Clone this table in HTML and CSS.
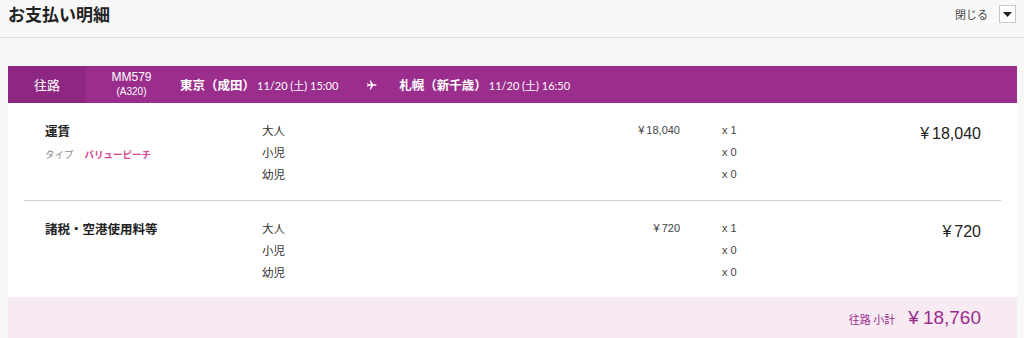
FILE: index.html
```html
<!DOCTYPE html>
<html lang="ja">
<head>
<meta charset="utf-8">
<title>お支払い明細</title>
<link rel="stylesheet" href="styles.css">
</head>
<body>
<header class="top">
  <h1 class="title">お支払い明細</h1>
  <div class="close">
    <span class="close-label">閉じる</span>
    <span class="close-btn"><svg width="9" height="5" viewBox="0 0 9 5"><path d="M0 0h9L4.5 5z" fill="#222"/></svg></span>
  </div>
</header>
<main class="card">
  <div class="flight">
    <div class="dir">往路</div>
    <div class="fno"><span class="num">MM579</span><span class="eq">(A320)</span></div>
    <div class="leg">
      <span class="city">東京（成田）</span><span class="time">11/20 (土) 15:00</span>
      <svg class="plane" width="10" height="10" viewBox="0 0 24 22"><path d="M23 11c0-1-1-1.6-2-1.6h-6L9 0H6.5l3 9.4H4L2 7H0l1.4 4L0 15h2l2-2.4h5.5L6.5 22H9l6-9.4h6c1 0 2-.6 2-1.6z" fill="#fff"/></svg>
      <span class="city">札幌（新千歳）</span><span class="time">11/20 (土) 16:50</span>
    </div>
  </div>

  <section class="row">
    <div class="label">
      <div class="name">運賃</div>
      <div class="type"><span class="type-k">タイプ</span><span class="type-v">バリューピーチ</span></div>
    </div>
    <div class="pax">
      <div>大人</div><div>小児</div><div>幼児</div>
    </div>
    <div class="price"><div><span class="yen">¥</span>18,040</div></div>
    <div class="qty"><div>x 1</div><div>x 0</div><div>x 0</div></div>
    <div class="total"><span class="yen">¥</span>18,040</div>
  </section>
  <hr class="sep">
  <section class="row row2">
    <div class="label">
      <div class="name">諸税・空港使用料等</div>
    </div>
    <div class="pax">
      <div>大人</div><div>小児</div><div>幼児</div>
    </div>
    <div class="price"><div><span class="yen">¥</span>720</div></div>
    <div class="qty"><div>x 1</div><div>x 0</div><div>x 0</div></div>
    <div class="total"><span class="yen">¥</span>720</div>
  </section>

  <div class="subtotal">
    <span class="sub-label">往路 小計</span>
    <span class="sub-amount"><span class="yen">¥</span>18,760</span>
  </div>
</main>
</body>
</html>
```

FILE: styles.css
```css
* { box-sizing: border-box; }
html, body { margin: 0; padding: 0; }
body {
  background: #f8f8f8;
  font-family: "Noto Sans CJK JP", "Noto Sans", sans-serif;
  color: #222;
  width: 1024px;
  height: 338px;
  overflow: hidden;
}
.top {
  height: 38px;
  border-bottom: 1px solid #dcdcdc;
  display: flex;
  align-items: flex-start;
  justify-content: space-between;
  padding: 0 8px 0 8px;
}
.title {
  margin: 0;
  font-size: 17px;
  font-weight: 700;
  line-height: 28px;
  color: #222;
}
.close {
  display: flex;
  align-items: center;
  gap: 11px;
  padding-top: 5px;
}
.close-label {
  font-size: 11px;
  color: #444;
  line-height: 18px;
}
.close-btn {
  width: 17px;
  height: 18px;
  border: 1px solid #c8c8c8;
  background: #fff;
  display: flex;
  align-items: center;
  justify-content: center;
}
.card {
  margin: 28px 0 0 8px;
  width: 1009px;
  background: #fff;
}
.flight {
  height: 37px;
  background: #9b2d8d;
  color: #fff;
  display: flex;
  align-items: center;
}
.dir {
  width: 78px;
  height: 100%;
  background: #8d2782;
  display: flex;
  align-items: center;
  justify-content: center;
  font-size: 13px;
}
.fno {
  width: 94px;
  display: flex;
  flex-direction: column;
  align-items: center;
  line-height: 14px;
  padding-right: 3px;
}
.num { font-family: "Liberation Sans", "Noto Sans CJK JP", sans-serif; font-size: 12px; }
.eq { font-family: "Liberation Sans", "Noto Sans CJK JP", sans-serif; font-size: 10px; margin-top: 1px; }
.leg {
  display: flex;
  align-items: center;
}
.city {
  font-size: 12.5px;
  font-weight: 700;
}
.time {
  font-family: "Lato", "Noto Sans CJK JP", sans-serif;
  font-size: 11px;
  margin-left: 2px;
}
.plane {
  margin: 0 22px 0 29px;
}
.row {
  display: grid;
  grid-template-columns: 217px 300px 118px 84px 1fr;
  padding: 16px 36px 15px 37px;
  font-size: 11.5px;
  line-height: 22px;
}
.row2 { padding-bottom: 14px; }
.label .name {
  font-size: 12.5px;
  font-weight: 700;
  line-height: 24px;
}
.type {
  font-size: 9.5px;
  line-height: 22px;
}
.type-k { color: #888; margin-right: 11px; }
.type-v { color: #d7448f; font-weight: 700; }
.pax { color: #333; }
.price {
  text-align: right;
  font-family: "Liberation Sans", "Noto Sans CJK JP", sans-serif;
  font-size: 11px;
  color: #444;
}
.price .yen { margin-right: 2px; }
.qty {
  padding-left: 42px;
  font-family: "Liberation Sans", "Noto Sans CJK JP", sans-serif;
  font-size: 11px;
  color: #444;
}
.total {
  text-align: right;
  font-family: "Liberation Sans", "Noto Sans CJK JP", sans-serif;
  font-size: 16px;
  color: #222;
  line-height: 24px;
  padding-top: 3px;
}
.total .yen { margin-right: 3px; }
.sep {
  margin: 0 16px;
  border: 0;
  border-top: 1px solid #d0d0d0;
  height: 0;
}
.subtotal {
  background: #f8eaf3;
  height: 48px;
  display: flex;
  justify-content: flex-end;
  align-items: center;
  padding: 0 36px 6px 0;
  color: #9b2d8d;
}
.sub-label {
  font-size: 11px;
  margin-right: 13px;
  padding-top: 1px;
}
.sub-amount {
  font-family: "Liberation Sans", "Noto Sans CJK JP", sans-serif;
  font-size: 19px;
}
.sub-amount .yen { margin-right: 4px; }
```
